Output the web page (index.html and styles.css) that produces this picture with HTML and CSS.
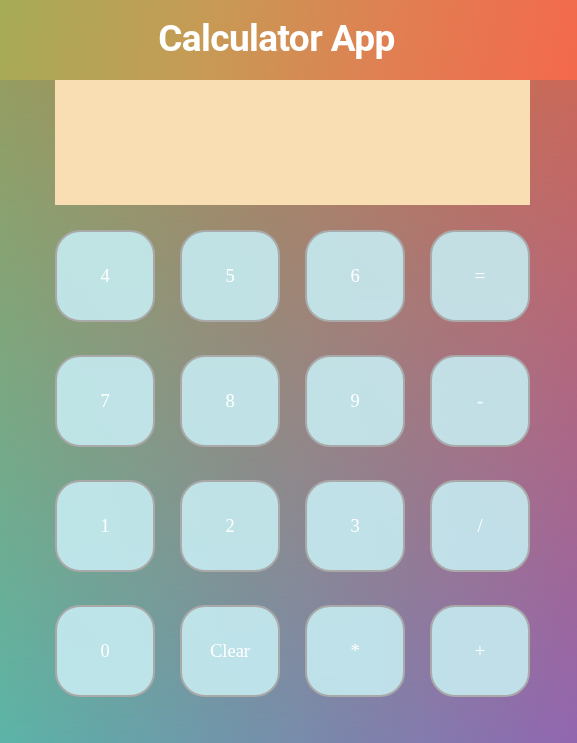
FILE: index.html
```html
<!DOCTYPE html>
<html lang="en">
<head>
<meta charset="utf-8">
<title>Calculator App</title>
<link rel="stylesheet" href="styles.css">
</head>
<body>
<div class="backdrop"></div>
<header class="app-header">
  <h1 class="app-title">Calculator App</h1>
</header>
<main class="calculator">
  <div class="display"></div>
  <div class="keys">
    <button class="key">4</button>
    <button class="key">5</button>
    <button class="key">6</button>
    <button class="key">=</button>
    <button class="key">7</button>
    <button class="key">8</button>
    <button class="key">9</button>
    <button class="key">-</button>
    <button class="key">1</button>
    <button class="key">2</button>
    <button class="key">3</button>
    <button class="key">/</button>
    <button class="key">0</button>
    <button class="key">Clear</button>
    <button class="key">*</button>
    <button class="key">+</button>
  </div>
</main>
</body>
</html>
```
FILE: styles.css
```css
html, body {
  margin: 0;
  padding: 0;
  min-height: 100%;
}
body {
  position: relative;
  min-height: 743px;
  background: linear-gradient(to right, #9c9b5a, #d2684f);
}
.backdrop {
  position: fixed;
  inset: 0;
  z-index: -1;
  background: linear-gradient(to right, #5bb4a7, #9166b0);
  -webkit-mask-image: linear-gradient(to bottom, transparent, #000);
  mask-image: linear-gradient(to bottom, transparent, #000);
}
.app-header {
  height: 80px;
  display: flex;
  align-items: center;
  justify-content: center;
  padding-right: 24px;
  background: linear-gradient(100deg, #a7ac56 0%, #c69b55 35%, #e27d52 70%, #f3694b 100%);
}
.app-title {
  margin: 0;
  color: #fff;
  font-family: Roboto, "Liberation Sans", sans-serif;
  font-weight: 700;
  font-size: 37px;
  letter-spacing: -0.6px;
  line-height: 1;
  padding-bottom: 3px;
}
.calculator {
  width: 475px;
  margin-left: 55px;
}
.display {
  height: 125px;
  background: #fadeb3;
}
.keys {
  margin-top: 25px;
  display: grid;
  grid-template-columns: repeat(4, 100px);
  grid-auto-rows: 92px;
  column-gap: 25px;
  row-gap: 33px;
}
.key {
  box-sizing: border-box;
  width: 100%;
  height: 100%;
  border: 2px solid #a9a9a9;
  border-radius: 25px;
  background: rgba(197, 235, 241, 0.9);
  color: #fff;
  font-family: "Liberation Serif", "Times New Roman", serif;
  font-size: 18.5px;
  padding: 0;
}
```
